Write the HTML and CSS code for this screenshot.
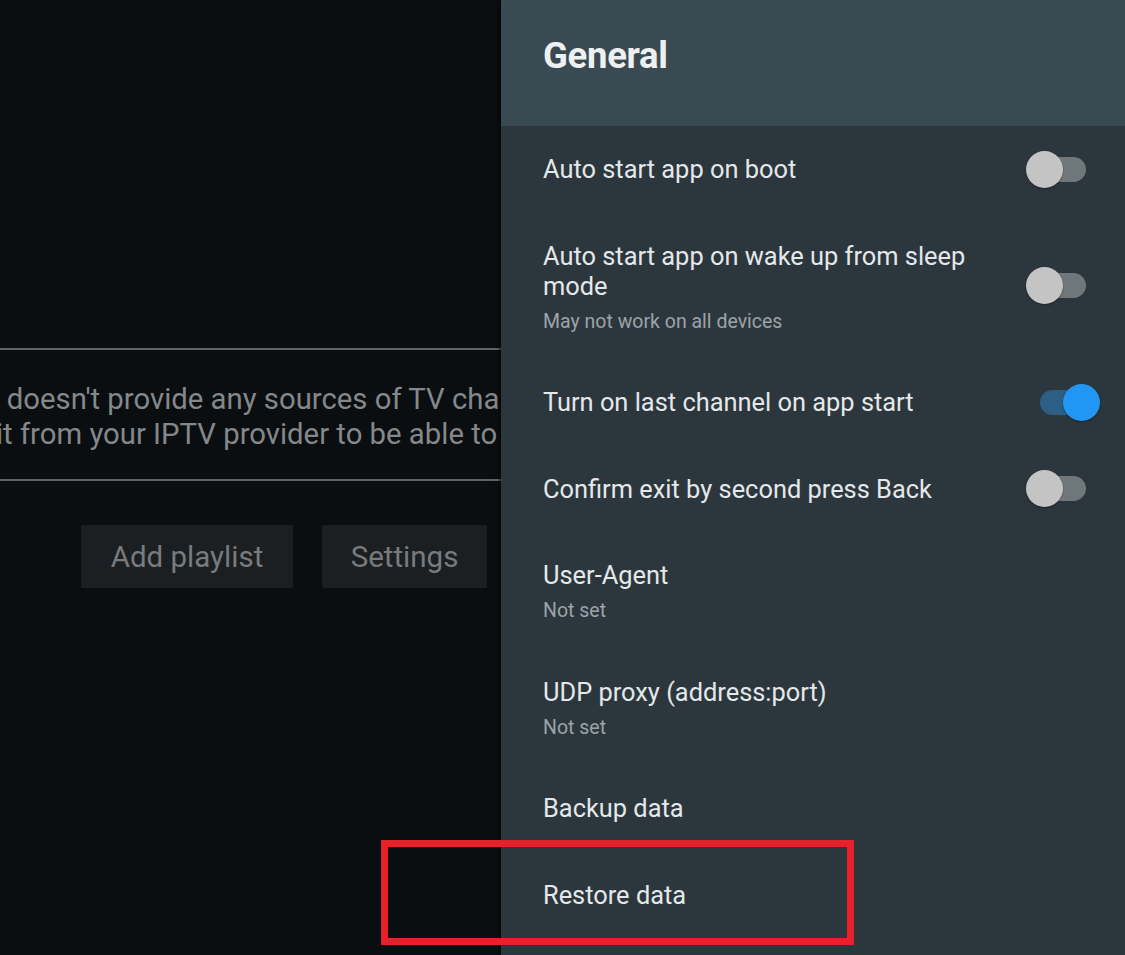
FILE: index.html
```html
<!DOCTYPE html>
<html>
<head>
<meta charset="utf-8">
<link rel="stylesheet" href="styles.css">
</head>
<body>
<div class="screen">
  <main class="main">
    <div class="message">
      <div class="msg-line first">TiviMate doesn't provide any sources of TV channels.</div>
      <div class="msg-line second">You need to get it from your IPTV provider to be able to watch TV.</div>
    </div>
    <div class="actions">
      <div class="btn add">Add playlist</div>
      <div class="btn set">Settings</div>
    </div>
  </main>

  <aside class="panel">
    <header class="panel-head">General</header>
    <div class="list">
      <div class="row">
        <div class="texts"><div class="title">Auto start app on boot</div></div>
        <div class="toggle"><span class="track"></span><span class="thumb"></span></div>
      </div>
      <div class="row">
        <div class="texts">
          <div class="title">Auto start app on wake up from sleep<br>mode</div>
          <div class="sub">May not work on all devices</div>
        </div>
        <div class="toggle"><span class="track"></span><span class="thumb"></span></div>
      </div>
      <div class="row">
        <div class="texts"><div class="title">Turn on last channel on app start</div></div>
        <div class="toggle on"><span class="track"></span><span class="thumb"></span></div>
      </div>
      <div class="row">
        <div class="texts"><div class="title">Confirm exit by second press Back</div></div>
        <div class="toggle"><span class="track"></span><span class="thumb"></span></div>
      </div>
      <div class="row">
        <div class="texts"><div class="title">User-Agent</div><div class="sub">Not set</div></div>
      </div>
      <div class="row">
        <div class="texts"><div class="title">UDP proxy (address:port)</div><div class="sub">Not set</div></div>
      </div>
      <div class="row">
        <div class="texts"><div class="title">Backup data</div></div>
      </div>
      <div class="row">
        <div class="texts"><div class="title">Restore data</div></div>
      </div>
    </div>
  </aside>

  <div class="highlight"></div>
</div>
</body>
</html>
```

FILE: styles.css
```css
* { box-sizing: border-box; }
html, body { margin: 0; padding: 0; }
body {
  width: 1125px;
  height: 955px;
  overflow: hidden;
  background: #0b0e10;
  font-family: Roboto, "Noto Sans", "Liberation Sans", sans-serif;
}
.screen {
  position: relative;
  width: 1125px;
  height: 955px;
  overflow: hidden;
}
.main {
  display: flex;
  flex-direction: column;
  padding-top: 348px;
}
.message {
  border-top: 2px solid #606466;
  border-bottom: 2px solid #606466;
  height: 133px;
  display: flex;
  flex-direction: column;
  justify-content: center;
  align-items: flex-start;
  padding-top: 4px;
  overflow: hidden;
}
.msg-line {
  color: #84888b;
  font-size: 29.3px;
  line-height: 35px;
  white-space: nowrap;
}
.msg-line.first { margin-left: -113px; }
.msg-line.second { margin-left: -214px; }
.actions {
  display: flex;
  gap: 29px;
  padding-left: 81px;
  margin-top: 44px;
}
.btn {
  background: #1c1f22;
  color: #777b7e;
  font-size: 29.5px;
  height: 63px;
  display: flex;
  align-items: center;
  justify-content: center;
  border-radius: 2px;
}
.btn.add { width: 212px; }
.btn.set { width: 165px; }

.panel {
  position: absolute;
  top: 0;
  right: 0;
  width: 624px;
  height: 955px;
  background: #2c373d;
  box-shadow: -2px 0 3px rgba(0,0,0,0.5);
  display: flex;
  flex-direction: column;
}
.panel-head {
  flex: none;
  height: 126px;
  background: #3a4a52;
  color: #eef1f2;
  font-weight: 700;
  font-size: 36.5px;
  display: flex;
  align-items: center;
  padding-left: 42px;
  padding-bottom: 16px;
  letter-spacing: -0.3px;
}
.list { display: flex; flex-direction: column; flex: none; }
.row {
  display: flex;
  align-items: center;
  justify-content: space-between;
  padding: 28.25px 25px 28.25px 42px;
}
.title {
  color: #e4e8ea;
  font-size: 25.4px;
  line-height: 30px;
}
.sub {
  color: #9ba4a8;
  font-size: 19.5px;
  line-height: 19px;
  margin-top: 11px;
}
.toggle {
  position: relative;
  width: 74px;
  height: 30px;
  flex: none;
}
.track {
  position: absolute;
  left: 4px;
  top: 2.5px;
  width: 56px;
  height: 25px;
  border-radius: 13px;
  background: #6f777b;
}
.thumb {
  position: absolute;
  left: 0;
  top: -3.5px;
  width: 37px;
  height: 37px;
  border-radius: 50%;
  background: #c4c4c4;
  box-shadow: 0 1px 2px rgba(0,0,0,0.35);
}
.toggle.on .track { left: 14px; background: #2c5f86; }
.toggle.on .thumb { left: 37px; background: #2196f3; }

.highlight {
  position: absolute;
  left: 381px;
  top: 840px;
  width: 473px;
  height: 105px;
  border: 7px solid #e8202a;
}
```
